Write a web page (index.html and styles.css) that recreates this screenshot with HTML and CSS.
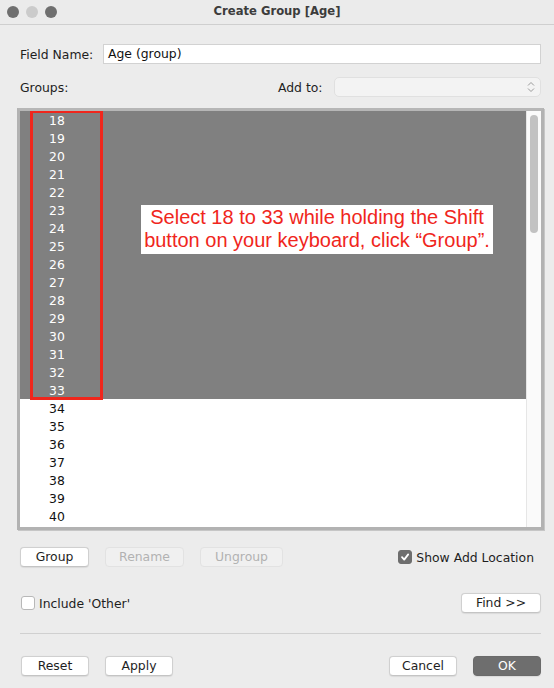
FILE: index.html
```
<!DOCTYPE html>
<html>
<head>
<meta charset="utf-8">
<link rel="stylesheet" href="styles.css">
</head>
<body>
<div class="window">
  <div class="titlebar">
    <div class="lights"><span class="light dark"></span><span class="light light-mid"></span><span class="light dark"></span></div>
    <div class="title">Create Group [Age]</div>
  </div>
  <div class="content">
    <div class="row field-row">
      <label class="lbl">Field Name:</label>
      <div class="input">Age (group)</div>
    </div>
    <div class="row groups-row">
      <label class="lbl">Groups:</label>
      <div class="addto">
        <label class="lbl">Add to:</label>
        <div class="select">
          <svg class="chev" width="8" height="12" viewBox="0 0 8 12"><path d="M1 4.5 L4 1.5 L7 4.5 M1 7.5 L4 10.5 L7 7.5" fill="none" stroke="#9a9a9a" stroke-width="1"/></svg>
        </div>
      </div>
    </div>
    <div class="listbox">
      <div class="list">
        <div class="item sel">18</div>
        <div class="item sel">19</div>
        <div class="item sel">20</div>
        <div class="item sel">21</div>
        <div class="item sel">22</div>
        <div class="item sel">23</div>
        <div class="item sel">24</div>
        <div class="item sel">25</div>
        <div class="item sel">26</div>
        <div class="item sel">27</div>
        <div class="item sel">28</div>
        <div class="item sel">29</div>
        <div class="item sel">30</div>
        <div class="item sel">31</div>
        <div class="item sel">32</div>
        <div class="item sel">33</div>
        <div class="item">34</div>
        <div class="item">35</div>
        <div class="item">36</div>
        <div class="item">37</div>
        <div class="item">38</div>
        <div class="item">39</div>
        <div class="item">40</div>
        <div class="redbox"></div>
        <div class="note">Select 18 to 33 while holding the Shift<br>button on your keyboard, click “Group”.</div>
      </div>
      <div class="scrollbar"><div class="thumb"></div></div>
    </div>
    <div class="row actions-row">
      <div class="btns">
        <div class="btn w-group">Group</div>
        <div class="btn disabled w-rename">Rename</div>
        <div class="btn disabled w-ungroup">Ungroup</div>
      </div>
      <div class="check-wrap">
        <span class="checkbox checked"><svg width="10" height="10" viewBox="0 0 10 10"><path d="M2 5.2 L4.2 7.6 L8.2 2.4" fill="none" stroke="#fff" stroke-width="1.8" stroke-linecap="round" stroke-linejoin="round"/></svg></span>
        <span class="check-lbl">Show Add Location</span>
      </div>
    </div>
    <div class="row other-row">
      <div class="check-wrap">
        <span class="checkbox"></span>
        <span class="check-lbl">Include 'Other'</span>
      </div>
      <div class="btn w-find">Find &gt;&gt;</div>
    </div>
    <div class="sep"></div>
    <div class="row bottom-row">
      <div class="btns">
        <div class="btn w-reset">Reset</div>
        <div class="btn w-apply">Apply</div>
      </div>
      <div class="btns">
        <div class="btn w-cancel">Cancel</div>
        <div class="btn primary w-ok">OK</div>
      </div>
    </div>
  </div>
</div>
</body>
</html>
```
FILE: styles.css
```
* { box-sizing: border-box; }
html, body { margin: 0; padding: 0; }
body {
  width: 554px;
  height: 688px;
  background: #ececec;
  font-family: "DejaVu Sans", "Noto Sans", sans-serif;
  font-size: 12.4px;
  color: #1e1e1e;
  overflow: hidden;
}
.window { width: 554px; height: 688px; }
.titlebar {
  height: 25px;
  border-bottom: 1px solid #cfcfcf;
  background: #ebebeb;
  display: flex;
  align-items: center;
  position: relative;
}
.lights { display: flex; gap: 7px; padding-left: 7px; }
.light { width: 12px; height: 12px; border-radius: 50%; display: block; }
.light.dark { background: #6f6f6f; }
.light.light-mid { background: #cbcbcb; }
.title {
  position: absolute; left: 0; right: 0; top: 0; height: 24px;
  line-height: 23px;
  text-align: center;
  font-weight: bold;
  font-size: 11.6px;
  color: #3c3c3c;
}
.content { padding: 19px 13px 0 20px; }
.row { display: flex; align-items: center; }
.lbl { color: #1e1e1e; }
.field-row { height: 20px; justify-content: space-between; }
.input {
  width: 438px; height: 20px;
  background: #fff;
  border: 1px solid #d2d2d2;
  padding: 0 4px;
  line-height: 18px;
  color: #111;
}
.groups-row { margin-top: 13px; height: 20px; justify-content: space-between; }
.addto { display: flex; align-items: center; gap: 0; }
.addto .lbl { width: 56px; }
.select {
  width: 207px; height: 20px;
  background: #f3f3f3;
  border: 1px solid #e0e0e0;
  border-radius: 5px;
  display: flex; align-items: center; justify-content: flex-end;
  padding-right: 5px;
}
.listbox {
  margin-top: 11px;
  margin-left: -3px;
  width: 527px;
  height: 422px;
  border: 3px solid #b2b2b2;
  border-top-color: #b6b6b6;
  box-shadow: 1px 1px 0 #c6c6c6;
  background: #fff;
  display: flex;
}
.list { position: relative; flex: 1; overflow: hidden; }
.item {
  height: 18px;
  padding-top: 2px;
  line-height: 16px;
  padding-left: 29px;
  color: #111;
}
.item.sel { background: #808080; color: #fff; }
.redbox {
  position: absolute;
  left: 10px; top: -1px;
  width: 73px; height: 290px;
  border: 3px solid #f0261c;
}
.note {
  position: absolute;
  left: 121px; top: 94px;
  width: 352px; height: 49px;
  background: #fff;
  color: #f0261c;
  font-family: "Liberation Sans", Arial, sans-serif;
  font-size: 20px;
  line-height: 23px;
  text-align: center;
  padding-top: 1px;
  white-space: nowrap;
}
.scrollbar {
  width: 15px;
  background: #fafafa;
  border-left: 1px solid #e6e6e6;
  padding: 4px 0 0 3px;
}
.thumb { width: 8px; height: 118px; border-radius: 4px; background: #c2c2c2; }
.btns { display: flex; gap: 16px; }
.btn {
  height: 20px;
  background: #fff;
  border: 1px solid #d0d0d0;
  border-bottom-color: #c4c4c4;
  border-radius: 4px;
  box-shadow: 0 0.5px 1px rgba(0,0,0,0.08);
  text-align: center;
  line-height: 18px;
  color: #1e1e1e;
}
.btn.disabled { background: #f0f0f0; border-color: #e2e2e2; color: #b2b2b2; box-shadow: none; }
.btn.primary { background: #6e6e6e; border-color: #6a6a6a; color: #fff; }
.w-group { width: 69px; }
.w-rename { width: 79px; }
.w-ungroup { width: 83px; }
.w-find { width: 80px; }
.w-reset { width: 68px; }
.w-apply { width: 68px; }
.w-cancel { width: 68px; }
.w-ok { width: 68px; }
.actions-row { margin-top: 17px; height: 20px; justify-content: space-between; }
.check-wrap { display: flex; align-items: center; gap: 4px; }
.checkbox {
  width: 14px; height: 14px;
  border: 1px solid #b8b8b8;
  border-radius: 3px;
  background: #fff;
  display: flex; align-items: center; justify-content: center;
}
.checkbox.checked { background: #6e6e6e; border-color: #6e6e6e; }
.actions-row .check-wrap { margin-right: 7px; }
.other-row { margin-top: 26px; height: 20px; justify-content: space-between; padding-left: 1px; }
.sep { margin-top: 20px; height: 1px; background: #d0d0d0; }
.bottom-row { margin-top: 22px; height: 20px; justify-content: space-between; padding-left: 1px; }
```
